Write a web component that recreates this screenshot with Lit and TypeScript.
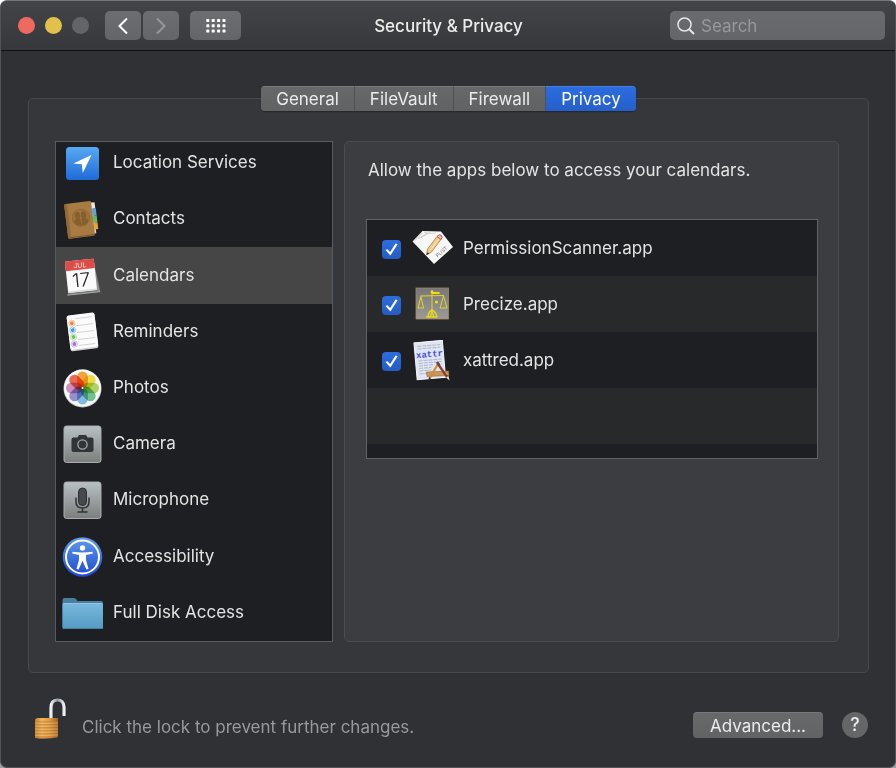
import { LitElement, html, svg, css } from "lit";
import { customElement, state } from "lit/decorators.js";
import { classMap } from "lit/directives/class-map.js";

const petals: [number, string][] = [
  [0, "#f9a83a"], [45, "#f2e04a"], [90, "#b2d766"], [135, "#74c596"],
  [180, "#86bfe6"], [225, "#9a94d0"], [270, "#d293c2"], [315, "#f06a58"],
];

const icons: Record<string, unknown> = {
  location: svg`
    <defs><linearGradient id="loc" x2="0" y2="1"><stop stop-color="#58a9f2"/><stop offset="1" stop-color="#1f6bd8"/></linearGradient></defs>
    <rect x="4" y="4" width="33" height="33" rx="3.500" fill="url(#loc)"/>
    <path d="M29.500 12 L20.800 30 L19.800 21.300 L11.300 20.400 Z" fill="#fff"/>`,
  contacts: svg`
    <g transform="rotate(-7 20 20)">
      <path d="M29 5h3.500v31H29z" fill="#d8d4c8"/>
      <path d="M31 5h3.500v6h-3.500z" fill="#e8e8e4"/><path d="M31 11h4v7h-4z" fill="#5ba7d9"/>
      <path d="M31 18h4v7h-4z" fill="#64bb62"/><path d="M31 25h4v7h-4z" fill="#e7a23a"/>
      <rect x="4" y="3" width="27" height="35" rx="1.500" fill="#a87b42"/>
      <path d="M4 4.500Q4 3 5.500 3H7v35H5.500Q4 38 4 36.500z" fill="#94693a"/>
      <path d="M5 37H31" stroke="#7b572d" stroke-width="1"/>
      <circle cx="19" cy="18.500" r="8.500" fill="#a0733b" stroke="#8f6935"/>
      <g fill="#84602f"><ellipse cx="16" cy="16" rx="2.700" ry="3.600"/><ellipse cx="22" cy="16" rx="2.700" ry="3.600"/>
      <path d="M11.500 22.500q1-3.500 4.500-3.500 2.300 0 3 1.500.7-1.500 3-1.500 3.500 0 4.500 3.500-2.500 3.800-7.500 3.800t-7.500-3.800z"/></g>
      <path d="M19 13v11" stroke="#a0733b" stroke-width=".8"/>
    </g>`,
  calendar: svg`
    <g transform="rotate(-6 20 20)">
      <path d="M5 34l-1.500 3.500h33l-1.500-4z" fill="#73777a"/><path d="M33 6l3.500 31.500-4-2z" fill="#8d9194"/>
      <path d="M3.500 37.500h33" stroke="#b5b8ba" stroke-width=".8"/>
      <rect x="4.500" y="4" width="29" height="31.500" rx="1" fill="#fafafa"/>
      <path d="M5.500 4h27q1 0 1 1v8.500h-29V5q0-1 1-1z" fill="#dd4c47"/>
      <path d="M4.500 34h29v1.500h-29z" fill="#dcdcdc"/>
      <text x="19" y="11.500" text-anchor="middle" class="g-month">JUL</text>
      <text x="19" y="30.500" text-anchor="middle" class="g-day">17</text>
    </g>`,
  reminders: svg`
    <g transform="rotate(-7 20 20)">
      <rect x="6.500" y="2.500" width="28" height="35.500" rx="2" fill="#cfcfcf"/>
      <rect x="6.500" y="2" width="28" height="34.500" rx="2" fill="#fbfbfb"/>
      <path d="M15 6H32M15 13H32M15 20H32M15 27H32M15 33H32" stroke="#cccccc" stroke-width=".8"/>
      ${[["#f18a35", 10], ["#3f9fe6", 17], ["#72c360", 24], ["#a574cf", 31]].map(
        ([c, y]) => svg`<circle cx="11" cy=${y} r="3" fill="#fff" stroke=${c} stroke-width=".5"/><circle cx="11" cy=${y} r="2" fill=${c}/>`
      )}
    </g>`,
  photos: svg`
    <circle cx="20.500" cy="20.500" r="19" fill="#c4c4c4"/><circle cx="20.500" cy="20" r="18.500" fill="#f9f9f9"/>
    ${petals.map(([a, c]) => svg`<rect class="petal" x="15.200" y="3.500" width="10.600" height="16.500" rx="5.300" fill=${c} transform="rotate(${a} 20.500 20)"/>`)}
    <circle cx="20.500" cy="20" r="1" fill="#fff"/>`,
  camera: svg`
    <defs><linearGradient id="mtl" x2="0" y2="1"><stop stop-color="#b9c1c5"/><stop offset="1" stop-color="#7b7e7c"/></linearGradient></defs>
    <rect x="2" y="2" width="37" height="36.500" rx="2.500" fill="url(#mtl)" stroke="#a7acad"/>
    <path d="M11.500 13.500h4l1.500-2.500h7l1.500 2.500h4q2 0 2 2v10.500q0 2-2 2h-18q-2 0-2-2V15.500q0-2 2-2z" fill="#323537"/>
    <circle cx="20.500" cy="20.500" r="4.600" fill="none" stroke="#a2a7a9" stroke-width="1.300"/>`,
  microphone: svg`
    <defs><linearGradient id="mtm" x2="0" y2="1"><stop stop-color="#b9c1c5"/><stop offset="1" stop-color="#7b7e7c"/></linearGradient></defs>
    <rect x="2" y="2" width="37" height="36.500" rx="2.500" fill="url(#mtm)" stroke="#a7acad"/>
    <rect x="16.500" y="8" width="8" height="17.500" rx="4" fill="#45494b" stroke="#2d3032"/>
    <path d="M14 17.500v4.500q0 6 6.500 6t6.500-6v-4.500M20.500 28v3.500M15.500 32h10" fill="none" stroke="#303335" stroke-width="1.500"/>`,
  accessibility: svg`
    <defs><linearGradient id="acc" x2="0" y2="1"><stop stop-color="#5f9bea"/><stop offset="1" stop-color="#1f49cf"/></linearGradient></defs>
    <circle cx="20.500" cy="20" r="19.800" fill="url(#acc)"/><circle cx="20.500" cy="20" r="16.500" fill="none" stroke="#fff" stroke-width="2"/>
    <circle cx="20.500" cy="11" r="2.700" fill="#fff"/>
    <path d="M10.500 14.700q10 1.600 20 0l.3 1.800-6.800 1.500v5l2.600 9-2.200.6-3.900-8.800-3.900 8.800-2.200-.6 2.600-9v-5l-6.800-1.500z" fill="#fff"/>`,
  folder: svg`
    <defs><linearGradient id="fld" x2="0" y2="1"><stop stop-color="#79b9dd"/><stop offset="1" stop-color="#559bc4"/></linearGradient></defs>
    <path d="M.5 7q0-2 2-2h9.500q1.500 0 2.500 1.500l1 1.500H39q2 0 2 2v24H.5z" fill="#4b7f9e"/>
    <path d="M.5 11.500q0-1.500 1.500-1.500h37.500q1.500 0 1.500 1.500v23q0 1.500-1.500 1.500H2q-1.500 0-1.500-1.500z" fill="url(#fld)"/>
    <path d="M1.500 10.500H40" stroke="#8cc6e4"/><path d="M1.500 35.500H40" stroke="#45809f"/>`,
  scanner: svg`
    <path d="M.5 13.500 L10.500 3 L29 3.500 L41 19 L22 36 Z" fill="#f7f7f5"/>
    <path d="M3 12.500 10.500 5M6 11l9-6M9 9.500l9-5M12 4q8 2.500 12 .5" stroke="#c6c6c4" stroke-width=".8" fill="none"/>
    <path d="M15.500 21 L25 8.500 L29 11.500 L19.500 24 L14.500 27 Z" fill="#efca8c" stroke="#ab8248" stroke-width=".8"/>
    <path d="M18.500 22l8.500-11.500" stroke="#fbe8c0"/><path d="M14.500 27l.8-2.800 2 1.300z" fill="#333"/>
    <path d="M25 8.500q2.500-3 4.500-1 1.500 1.500-.5 4z" fill="#eec0b8" stroke="#cc4f45" stroke-width="1"/>
    <text class="g-plist" transform="translate(25.500 29.500) rotate(-40)">PLIST</text>`,
  scales: svg`
    <defs><linearGradient id="scl" x2="0" y2="1"><stop stop-color="#77777b"/><stop offset="1" stop-color="#9b9a98"/></linearGradient></defs>
    <rect x="4" y="4" width="32.500" height="31" fill="url(#scl)" stroke="#a5895c" stroke-width=".8"/>
    <g fill="none" stroke="#e8d51c" stroke-width="1"><path d="M8.500 12 32 11.500M20 6v24M9 12.500l-3 11.500h5.500zM31.500 12l-3.500 12h7z"/>
    <path d="M16 33q0-5 4-7 4 2 5 7M18 33l2-5 2 5M14 33h11.500" stroke-width="1.500"/></g>
    <g fill="#f0dd1a"><circle cx="20" cy="8" r="1.500"/><path d="M20 8h7.500v2h-7.500z"/><circle cx="24.500" cy="18" r="1.600"/></g>`,
  xattr: svg`
    <g transform="rotate(-5 18 20)">
      <rect x="3.500" y="1.500" width="28.500" height="37" fill="#dfe5f2" stroke="#f8f8f8"/>
      <path d="M6.500 5.500h23M6.500 8h23M6.500 20h23M6.500 22.500h23M6.500 25h15M6.500 27.500h12M6.500 30h12M6.500 33h10" stroke="#b4b5c8" stroke-width="1" stroke-dasharray="4 1"/>
      <text x="18" y="17" text-anchor="middle" class="g-xattr">xattr</text>
    </g>
    <path d="M14.500 32l22-1 .5 4.500-22 1z" fill="#c8975a" stroke="#98683a" stroke-width=".6"/>
    <path d="M18 37.500L26.500 23" stroke="#d78b37" stroke-width="2.200"/><path d="M16.500 40l.4-3.200 2.300 1.400z" fill="#4c3425"/>
    <path d="M26 24l9 13" stroke="#8c3d2f" stroke-width="2.200"/><path d="M34 37.500l2.500-1.500 1 4.500z" fill="#e8e4df"/><path d="M25 22l2.500 3.500" stroke="#5b4946" stroke-width="2.600"/>`,
};

const services: [string, string][] = [
  ["Location Services", "location"], ["Contacts", "contacts"], ["Calendars", "calendar"],
  ["Reminders", "reminders"], ["Photos", "photos"], ["Camera", "camera"],
  ["Microphone", "microphone"], ["Accessibility", "accessibility"], ["Full Disk Access", "folder"],
];

const apps: [string, string][] = [
  ["PermissionScanner.app", "scanner"], ["Precize.app", "scales"], ["xattred.app", "xattr"],
];

const glyph = (name: string) =>
  html`<svg class="glyph" width="41" height="41" viewBox="0 0 41 41" aria-hidden="true">${icons[name]}</svg>`;

@customElement("app-root")
export class AppRoot extends LitElement {
  @state() private tab = "Privacy";
  @state() private service = "Calendars";

  static styles = css`
    :host { display: block; font-family: Inter, "Liberation Sans", sans-serif; font-size: 17px; line-height: 24px; color: #e4e4e5; background: linear-gradient(#fff 50%, #a0a0a0 50%); }
    * { box-sizing: border-box; }
    button, input { font: inherit; color: inherit; margin: 0; border: 0; padding: 0; }
    svg { display: block; flex: none; }
    .window { min-height: 100vh; display: flex; flex-direction: column; border-radius: 7px; border: 1px solid #525356; border-top-color: #75767a; background: #303134; overflow: hidden; }
    header { height: 50px; flex: none; display: grid; grid-template-columns: 1fr auto 1fr; align-items: center; padding: 0 10px 0 17px; background: linear-gradient(#434447, #37383b); border-bottom: 1px solid #101113; }
    .left, .lights, .history { display: flex; align-items: center; }
    .lights { gap: 10px; margin-right: 16px; }
    .light { width: 17px; height: 17px; border-radius: 50%; background: #636467; }
    .close { background: #ee6a5f; }
    .minimise { background: #e1c04c; }
    .history { gap: 2px; margin-right: 11px; }
    .tool { width: 36px; height: 29px; border-radius: 5px; display: grid; place-items: center; color: #fff; background: linear-gradient(#6d6e71, #646568); }
    .tool:disabled { color: #96979a; }
    .wide { width: 51px; }
    h1 { margin: 0 6px 0 0; font-size: 17px; font-weight: 500; color: #ececec; }
    .search { justify-self: end; width: 215px; height: 29px; border-radius: 5px; display: flex; align-items: center; gap: 6px; padding-left: 7px; background: linear-gradient(#6a6b6e, #646568); }
    .search input { flex: 1; min-width: 0; background: none; outline: none; }
    .search input::placeholder { color: #97989b; opacity: 1; }
    main { flex: 1; display: flex; flex-direction: column; padding: 35px 26px 0 27px; }
    .tabs { align-self: center; display: flex; height: 25px; margin-bottom: -13px; border-radius: 4px; overflow: hidden; z-index: 1; background: #626366; box-shadow: 0 1px 1px #26272a; }
    .tab { padding: 0 15px; background: linear-gradient(#676869, #616263); border-top: 1px solid #7b7c7e; border-right: 1px solid #505153; line-height: 22px; color: #ebebeb; }
    .tab:last-child { border-right: 0; }
    .tab.on { background: linear-gradient(#2c6ce0, #255fc9); border-top-color: #4680e5; color: #fff; }
    .group { flex: 1; display: flex; gap: 11px; padding: 42px 29px 30px 26px; border: 1px solid #48494c; border-radius: 5px; background: #36373a; }
    .services { width: 278px; flex: none; display: flex; border: 1px solid #5a5b5e; background: #1e1f22; overflow: hidden; }
    .services ul { flex: 1; display: flex; flex-direction: column; margin-top: -7px; }
    ul { list-style: none; margin: 0; padding: 0; }
    .services li { flex: 1; min-height: 56px; display: flex; }
    .service { flex: 1; display: flex; align-items: center; gap: 10px; padding: 0 6px; background: none; text-align: left; }
    .service .glyph { margin-top: 1px; }
    .service.on { background: #464646; }
    .service span { padding-bottom: 2px; }
    .detail { flex: 1; min-width: 0; padding: 16px 20px 24px 21px; border: 1px solid #4b4c4f; border-radius: 5px; background: #3c3d40; }
    .detail p { margin: 0 0 37px 2px; }
    .apps { height: 240px; border: 1px solid #626366; overflow: hidden; background: #1e1f22; }
    .apps li { height: 56px; }
    .apps li:nth-child(even) { background: #28292b; }
    .app { height: 100%; display: flex; align-items: center; padding-left: 15px; }
    .app input { appearance: none; width: 19px; height: 19px; margin: 3px 11px 0 0; border-radius: 4px; display: grid; place-items: center; background: #626366; }
    .app input:checked { background: linear-gradient(#2f6ddd, #235cc4); }
    .app input:checked::before { content: ""; width: 14px; height: 14px; background: #fff; clip-path: polygon(8% 56%, 19% 46%, 40% 68%, 80% 6%, 93% 14%, 42% 92%); }
    .app .glyph { margin-right: 10px; }
    footer { display: flex; align-items: center; height: 94px; padding: 10px 1px 0 5px; }
    .lock { background: none; margin: 0 16px 12px 0; }
    .hint { flex: 1; color: #98999c; padding-top: 3px; }
    .push { height: 26px; width: 130px; border-radius: 4px; margin-right: 19px; background: linear-gradient(#68696b, #626365); border-top: 1px solid #77787a; line-height: 24px; color: #ececec; }
    .help { width: 26px; height: 26px; border-radius: 50%; background: #656668; color: #ececec; font-size: 18px; font-weight: 500; }
    .g-month { font-size: 7px; fill: #fbe4e2; }
    .g-day { font-size: 19px; font-weight: 300; fill: #222; }
    .g-plist { font-size: 5px; fill: #777; }
    .g-xattr { font: bold 9px "Liberation Mono", monospace; fill: #4650d8; }
    .petal { mix-blend-mode: multiply; }
  `;

  render() {
    return html`<div class="window">
      <header>
        <div class="left">
          <div class="lights">
            <button class="light close" aria-label="Close"></button>
            <button class="light minimise" aria-label="Minimise"></button>
            <button class="light" aria-label="Zoom" disabled></button>
          </div>
          <div class="history">
            <button class="tool" aria-label="Back"><svg width="12" height="18" viewBox="0 0 12 18" fill="none" stroke="currentColor" stroke-width="2"><path d="M10 1.500 2.500 9 10 16.500"/></svg></button>
            <button class="tool" aria-label="Forward" disabled><svg width="12" height="18" viewBox="0 0 12 18" fill="none" stroke="currentColor" stroke-width="2"><path d="M2 1.500 9.500 9 2 16.500"/></svg></button>
          </div>
          <button class="tool wide" aria-label="Show all">
            <svg width="20" height="14" viewBox="0 0 20 14" fill="currentColor">
              ${[0, 1, 2].map((r) => [0, 1, 2, 3].map((c) => svg`<rect x=${c * 5.4 + 0.3} y=${r * 5.3} width="3" height="3" rx=".6"/>`))}
            </svg>
          </button>
        </div>
        <h1>Security &amp; Privacy</h1>
        <label class="search">
          <svg width="18" height="18" viewBox="0 0 18 18" fill="none" stroke="#e6e6e7" stroke-width="1.500"><circle cx="7.500" cy="7.500" r="6.500"/><path d="M12.200 12.200 17 17" stroke-width="2"/></svg>
          <input type="search" placeholder="Search" aria-label="Search" />
        </label>
      </header>
      <main>
        <div class="tabs" role="tablist">
          ${["General", "FileVault", "Firewall", "Privacy"].map(
            (t) => html`<button role="tab" aria-selected=${t === this.tab} class=${classMap({ tab: true, on: t === this.tab })} @click=${() => (this.tab = t)}>${t}</button>`
          )}
        </div>
        <section class="group">
          <nav class="services">
            <ul>
              ${services.map(
                ([name, icon]) => html`<li><button class=${classMap({ service: true, on: name === this.service })} @click=${() => (this.service = name)}>${glyph(icon)}<span>${name}</span></button></li>`
              )}
            </ul>
          </nav>
          <div class="detail">
            <p>Allow the apps below to access your calendars.</p>
            <ul class="apps">
              ${apps.map(([name, icon]) => html`<li><label class="app"><input type="checkbox" checked />${glyph(icon)}<span>${name}</span></label></li>`)}
              <li></li>
            </ul>
          </div>
        </section>
        <footer>
          <button class="lock" aria-label="Lock">
            <svg width="33" height="42" viewBox="0 0 33 42">
              <defs><linearGradient id="brass"><stop stop-color="#c9802e"/><stop offset=".3" stop-color="#eeb661"/><stop offset=".65" stop-color="#dc9a42"/><stop offset="1" stop-color="#a3611c"/></linearGradient>
              <linearGradient id="steel"><stop stop-color="#eef3f5"/><stop offset=".5" stop-color="#8c999e"/><stop offset="1" stop-color="#eef3f5"/></linearGradient></defs>
              <path d="M18 21V10q0-8 6.300-8T31 9v9" fill="none" stroke="url(#steel)" stroke-width="3.200"/>
              <path d="M2 21.500 4 20h21v19q-10 2.500-23 1z" fill="url(#brass)"/>
              <path d="M2 24h23M2 27h23M2 30h23M2 33h23M2 36h23M2 39h22" stroke="#b57428" stroke-width=".9"/>
              <path d="M2 25h23M2 28h23M2 31h23M2 34h23M2 37h23" stroke="#f3c77e" stroke-width=".6"/>
            </svg>
          </button>
          <span class="hint">Click the lock to prevent further changes.</span>
          <button class="push">Advanced...</button>
          <button class="help" aria-label="Help">?</button>
        </footer>
      </main>
    </div>`;
  }
}
